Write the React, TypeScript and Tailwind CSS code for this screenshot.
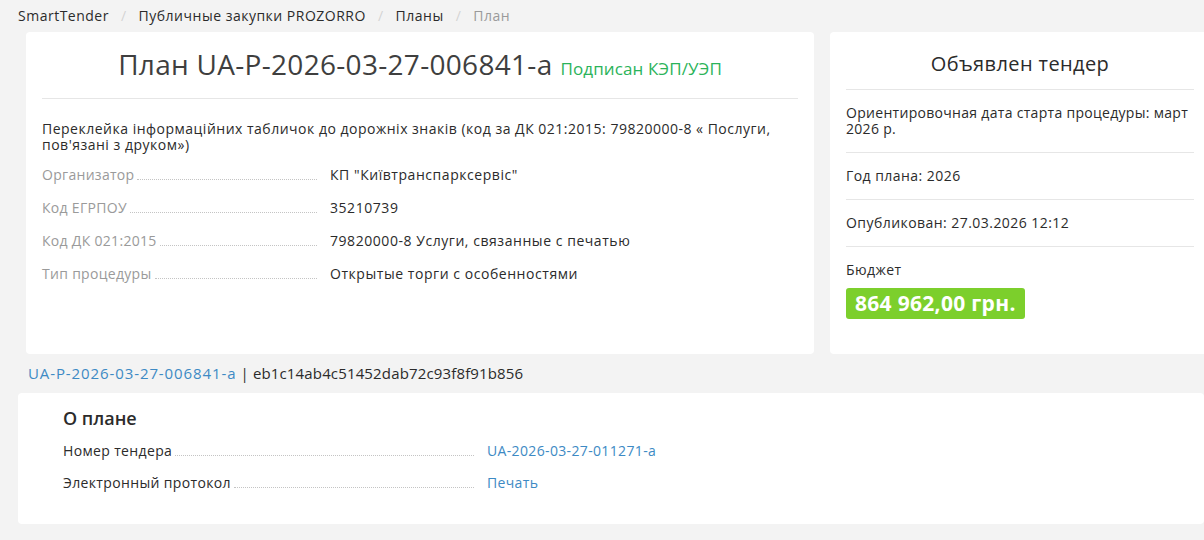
const font = { fontFamily: '"Open Sans", "Liberation Sans", sans-serif' };

const Row = ({ label, value }: { label: string; value: string }) => (
  <div className="flex items-end h-[33px]">
    <div className="flex items-end w-[278px] shrink-0">
      <span className="text-[14px] tracking-[0.3px] text-[#9a9a9a] whitespace-nowrap leading-[16px]">{label}</span>
      <span className="flex-1 mx-[3px] mb-[3px] border-b border-dotted border-[#c4c4c4]"></span>
    </div>
    <span className="ml-[10px] text-[14px] tracking-[0.55px] leading-[16px] text-[#2b2b2b] whitespace-nowrap">{value}</span>
  </div>
);

const AboutRow = ({ label, value }: { label: string; value: string }) => (
  <div className="flex items-end h-[32px]">
    <div className="flex items-end w-[414px] shrink-0">
      <span className="text-[14px] tracking-[0.35px] text-[#2b2b2b] whitespace-nowrap leading-[16px]">{label}</span>
      <span className="flex-1 mx-[3px] mb-[3px] border-b border-dotted border-[#c4c4c4]"></span>
    </div>
    <span className="ml-[10px] text-[14px] tracking-[0.35px] leading-[16px] text-[#3d8ac4]">{value}</span>
  </div>
);

export default function App() {
  return (
    <div className="w-[1204px] h-[540px] overflow-hidden bg-[#f3f3f3] text-[#2b2b2b]" style={font}>
      <div className="flex items-center gap-[12px] h-[30px] pl-[18px] text-[14px] tracking-[0.5px]">
        <span>SmartTender</span>
        <span className="text-[#d4d4d4]">/</span>
        <span>Публичные закупки PROZORRO</span>
        <span className="text-[#d4d4d4]">/</span>
        <span>Планы</span>
        <span className="text-[#d4d4d4]">/</span>
        <span className="text-[#9a9a9a]">План</span>
      </div>

      <div className="flex gap-[16px] mt-[2px] pl-[26px]">
        <div className="w-[788px] shrink-0 h-[322px] bg-white rounded-[4px] px-[16px]">
          <div className="flex items-baseline justify-center gap-[8px] pt-[11px] pb-[13px] border-b border-[#e6e6e6]">
            <span className="text-[28px] tracking-[0.3px] text-[#3f3f3f]">План UA-P-2026-03-27-006841-a</span>
            <span className="text-[17px] tracking-[0.1px] text-[#2bb35a]">Подписан КЭП/УЭП</span>
          </div>
          <p className="mt-[22px] text-[14px] tracking-[0.5px] leading-[16px] pr-[10px]">
            Переклейка інформаційних табличок до дорожніх знаків (код за ДК 021:2015: 79820000-8 « Послуги, пов'язані з друком»)
          </p>
          <div className="mt-[-3px]">
            <Row label="Организатор" value='КП "Київтранспарксервіс"' />
            <Row label="Код ЕГРПОУ" value="35210739" />
            <Row label="Код ДК 021:2015" value="79820000-8 Услуги, связанные с печатью" />
            <Row label="Тип процедуры" value="Открытые торги с особенностями" />
          </div>
        </div>

        <div className="w-[380px] shrink-0 h-[322px] bg-white rounded-[4px] pl-[16px] pr-[16px]">
          <div className="text-center text-[20px] font-medium tracking-[0.4px] pt-[17px] pb-[10px] border-b border-[#e6e6e6]">Объявлен тендер</div>
          <div className="py-[15px] text-[14px] tracking-[0.3px] leading-[16px] border-b border-[#e6e6e6]">
            <div className="-mr-[6px]">Ориентировочная дата старта процедуры: март 2026 р.</div>
          </div>
          <div className="py-[15px] text-[14px] tracking-[0.45px] leading-[16px] border-b border-[#e6e6e6]">Год плана: 2026</div>
          <div className="py-[15px] text-[14px] tracking-[0.45px] leading-[16px] border-b border-[#e6e6e6]">Опубликован: 27.03.2026 12:12</div>
          <div className="pt-[15px] text-[14px] tracking-[0.45px] leading-[16px]">Бюджет</div>
          <div className="mt-[10px] inline-block bg-[#7ccf2c] text-white font-bold text-[21px] tracking-[0.3px] leading-[31px] px-[9px] rounded-[3px]">
            864 962,00 грн.
          </div>
        </div>
      </div>

      <div className="pl-[28px] mt-[9px] text-[15px] leading-[20px]">
        <span className="text-[#3d8ac4] tracking-[0.9px]">UA-P-2026-03-27-006841-a</span>
        <span className="tracking-[0.15px]"> | eb1c14ab4c51452dab72c93f8f91b856</span>
      </div>

      <div className="ml-[18px] mt-[10px] h-[131px] bg-white rounded-[4px] pl-[45px] pt-[14px]">
        <div className="text-[18px] font-semibold leading-[22px]">О плане</div>
        <div className="mt-[-2px]">
          <AboutRow label="Номер тендера" value="UA-2026-03-27-011271-a" />
          <AboutRow label="Электронный протокол" value="Печать" />
        </div>
      </div>
    </div>
  );
}
